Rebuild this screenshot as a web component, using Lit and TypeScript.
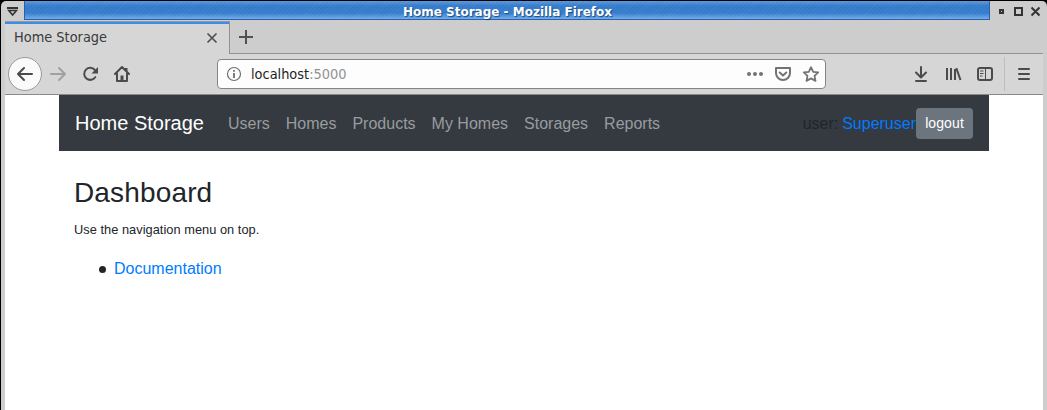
import { LitElement, html, css } from "lit";
import { customElement } from "lit/decorators.js";

@customElement("app-root")
export class AppRoot extends LitElement {
  static styles = css`
    * { box-sizing: border-box; }
    :host { display: block; height: 410px; overflow: hidden; background: #000; }
    .window { height: 410px; padding: 1px 0 0 1px; display: flex; flex-direction: column; }
    .frame { flex: 1; background: #cdcdcd; border-radius: 5px 5px 0 0; display: flex; flex-direction: column; padding: 0 4px; }
    .titlebar { height: 20px; flex: none; display: flex; margin: 0 -4px; padding-left: 4px; }
    .menu { width: 19px; height: 19px; }
    .caption { width: 966px; height: 19px; border: solid #2a62a5; border-width: 0 1px 1px; color: #fff; padding-left: 1px;
      background: repeating-linear-gradient(135deg, #ffffff0b 0 1px, transparent 1px 3px), linear-gradient(#5c98da 0, #347bcb 5px, #357ccb 12px, #72aced 18px);
      font: bold 12px/22px "DejaVu Sans", sans-serif; text-align: center; text-shadow: 1px 1px 1px #174a85; white-space: nowrap; }
    .buttons { width: 52px; height: 19px; margin-left: 2px; }
    .tabs { height: 33px; flex: none; display: flex; }
    .tab { width: 225px; display: flex; background: #d6d6d6; border-right: 1px solid #919191; border-top: 1px solid #999;
      box-shadow: inset 0 2px #3d8de8; font: 14.4px/30px "DejaVu Sans Condensed", "DejaVu Sans", sans-serif; font-stretch: condensed; color: #3b3b3b; padding-left: 9px; justify-content: space-between; }
    .strip { flex: 1; border-bottom: 1px solid #929292; }
    svg { display: block; flex: none; }
    .toolbar { height: 41px; flex: none; display: flex; background: #d6d6d6; border-bottom: 1px solid #8a8a8a; }
    .address { width: 609px; height: 30px; margin: 5px 1px 0 0; display: flex; background: #fdfdfd; border: 1px solid #858585; border-radius: 4px;
      font: 14.4px/28px "DejaVu Sans Condensed", "DejaVu Sans", sans-serif; font-stretch: condensed; color: #1f1f1f; justify-content: space-between; }
    .url { display: flex; }
    .port { color: #929292; }
    .page { flex: 1; background: #fff; padding: 0 54px; font: 16px/24px "Liberation Sans", Arial, sans-serif; color: #212529; }
    .navbar { height: 56px; display: flex; align-items: center; background: #343a40; padding: 0 16px; }
    .brand { font-size: 20px; line-height: 30px; color: #fff; margin-right: 16px; }
    .nav { display: flex; flex: 1; padding-top: 2px; }
    .nav a { padding: 0 8px; color: #999c9f; }
    .link { color: #007bff; }
    .user { white-space: pre; padding-top: 2px; word-spacing: -0.5px; }
    button { width: 57px; height: 31px; padding: 4px 8px; border: 1px solid #6c757d; border-radius: 3.2px; background: #6c757d; color: #fff; font: 14px/21px "Liberation Sans", Arial, sans-serif; letter-spacing: 0.1px; }
    .body { padding: 0 15px; }
    h1 { margin: 25px 0 8px; font-size: 28px; font-weight: 400; line-height: 33.6px; letter-spacing: 0.15px; }
    p { margin: 0 0 15px; font-size: 12.8px; letter-spacing: 0.035px; }
    ul { margin: 0; padding: 0; list-style: none; }
    li { display: flex; align-items: center; padding-left: 25px; }
    li::before { content: ""; width: 7px; height: 7px; border-radius: 50%; background: #212529; margin: 2px 8px 0 0; }
  `;

  render() {
    const links = ["Users", "Homes", "Products", "My Homes", "Storages", "Reports"];
    return html`
      <div class="window"><div class="frame">
        <div class="titlebar">
          <svg class="menu" viewBox="5 1 19 19" fill="none" stroke="#333"><path d="M7 8h11" stroke-width="2"/><path d="M8.8 10.5h7.6L12.6 15Z" stroke-width="1.6"/></svg>
          <div class="caption">Home Storage - Mozilla Firefox</div>
          <svg class="buttons" viewBox="992 1 52 19" fill="none" stroke="#333" stroke-width="2"><path d="M1000 10h3v3h-3zM1015 8h7v7h-7zM1031.5 7.5l8 8m0-8l-8 8"/></svg>
        </div>
        <div class="tabs">
          <div class="tab"><span>Home Storage</span><svg width="28" height="32" viewBox="201 22 28 32" fill="none" stroke="#505050" stroke-width="1.7"><path d="M207.5 33.5l9 9m0-9l-9 9"/></svg></div>
          <div class="strip"><svg width="30" height="32" viewBox="230 21 30 32" fill="none" stroke="#505050" stroke-width="2"><path d="M239 37h14M246 30v14"/></svg></div>
        </div>
        <div class="toolbar">
          <svg width="212" height="40" viewBox="5 54 212 40" fill="none" stroke="#4b4b4b" stroke-width="2" stroke-linecap="round" stroke-linejoin="round">
            <circle cx="25" cy="74" r="16.5" fill="#fafafa" stroke="#999" stroke-width="1"/>
            <path d="M18 74h14M24 68l-6 6 6 6"/>
            <path stroke="#a0a0a0" d="M51 74h14M59 68l6 6-6 6"/>
            <path d="M95.2 77.2A6 6 0 1 1 94.8 70"/><path fill="#4b4b4b" stroke="none" d="M98 67v6.5h-6.5Z"/>
            <path d="M115 74l7-7 7 7M117 73.5V81h10v-7.5"/><path d="M122 75.5v5M126 68v3" stroke-width="3" stroke-linecap="butt"/>
          </svg>
          <div class="address">
            <div class="url"><svg width="33" height="28" viewBox="218 60 33 28" fill="none" stroke="#707070"><circle cx="234" cy="74" r="6.5" stroke-width="1.2"/><path d="M234 73v5M234 70v1.8" stroke-width="1.8"/></svg><span>localhost<span class="port">:5000</span></span></div>
            <svg width="84" height="28" viewBox="741 60 84 28" fill="none" stroke="#737373" stroke-width="2" stroke-linecap="round" stroke-linejoin="round">
              <g fill="#737373" stroke="none"><circle cx="749" cy="74" r="2"/><circle cx="755" cy="74" r="2"/><circle cx="761" cy="74" r="2"/></g>
              <path d="M776 68h14v5a7 7 0 0 1-14 0ZM779.7 72.5l3.3 3 3.3-3"/>
              <path stroke-width="1.8" d="M811 67.2l2.2 4.6 5 .6-3.7 3.5 1 5-4.5-2.5-4.5 2.5 1-5-3.7-3.5 5-.6Z"/>
            </svg>
          </div>
          <svg width="216" height="40" viewBox="827 54 216 40" fill="none" stroke="#4b4b4b" stroke-width="2" stroke-linejoin="round">
            <path stroke-linecap="round" d="M921 67v10M916 72.5l5 5 5-5M916 81h10M1019 69h10M1019 74h10M1019 79h10"/>
            <path d="M947 68v12M951 68v12M955 69v11M956.3 68.2l4.2 11.8"/>
            <rect x="978" y="68" width="14" height="12" rx="2"/><path d="M985.5 68v12M980 71h3.5M980 73.5h3.5M980 76h2.5" stroke-width="1"/>
            <path stroke="#bdbdbd" stroke-width="1" d="M1004.5 57v34"/>
          </svg>
        </div>
        <div class="page">
          <div class="navbar">
            <span class="brand">Home Storage</span>
            <div class="nav">${links.map((t) => html`<a>${t}</a>`)}</div>
            <span class="user">user: <a class="link">Superuser</a></span><button>logout</button>
          </div>
          <div class="body">
            <h1>Dashboard</h1>
            <p>Use the navigation menu on top.</p>
            <ul><li><a class="link">Documentation</a></li></ul>
          </div>
        </div>
      </div></div>`;
  }
}
